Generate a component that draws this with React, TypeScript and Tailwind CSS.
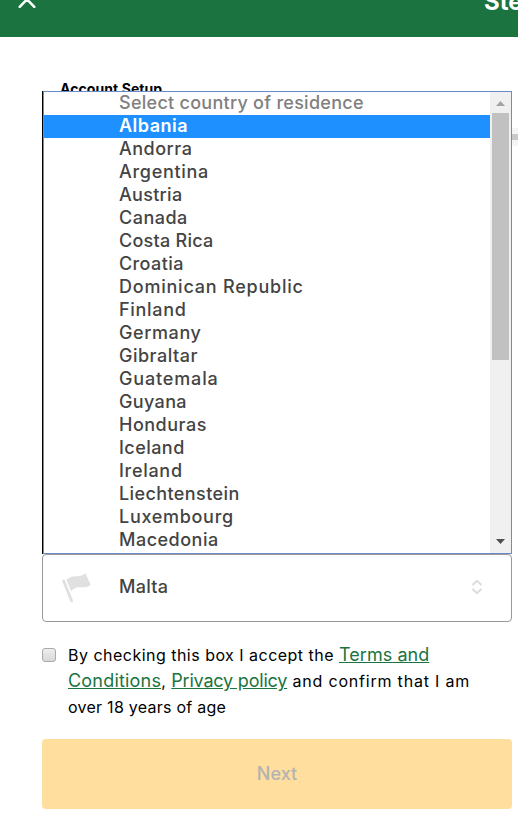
import React, { useState, type JSX } from "react";

const countries = [
  { name: "Albania", tracking: "tracking-[0.5px]" },
  { name: "Andorra", tracking: "tracking-[0.5px]" },
  { name: "Argentina", tracking: "tracking-[0.7px]" },
  { name: "Austria", tracking: "tracking-[0.3px]" },
  { name: "Canada", tracking: "tracking-[0.5px]" },
  { name: "Costa Rica", tracking: "tracking-[0.25px]" },
  { name: "Croatia", tracking: "tracking-[0.4px]" },
  { name: "Dominican Republic", tracking: "tracking-[0.78px]" },
  { name: "Finland", tracking: "tracking-[0.7px]" },
  { name: "Germany", tracking: "tracking-[0.6px]" },
  { name: "Gibraltar", tracking: "tracking-[0.5px]" },
  { name: "Guatemala", tracking: "tracking-[0.85px]" },
  { name: "Guyana", tracking: "tracking-[0.35px]" },
  { name: "Honduras", tracking: "tracking-[0.5px]" },
  { name: "Iceland", tracking: "tracking-[0.45px]" },
  { name: "Ireland", tracking: "tracking-[0.7px]" },
  { name: "Liechtenstein", tracking: "tracking-[0.4px]" },
  { name: "Luxembourg", tracking: "tracking-[0.7px]" },
  { name: "Macedonia", tracking: "tracking-[0.5px]" },
];

export default function App(): JSX.Element {
  const [active, setActive] = useState("Albania");
  const [accepted, setAccepted] = useState(false);

  return (
    <div className="h-[820px] w-full overflow-hidden bg-white font-['Inter',sans-serif] text-black">
      {/* Header */}
      <header className="flex h-[37px] items-start justify-between overflow-hidden bg-[#1b743f] pl-[18px] text-white">
        <button aria-label="Close" className="-mt-[10px]">
          <svg className="h-[18px] w-[18px]" viewBox="0 0 18 18" fill="none" stroke="currentColor">
            <path d="M1.7 1.7L16.3 16.9M16.3 1.7L1.7 16.9" strokeWidth={2.5} strokeLinecap="round" />
          </svg>
        </button>
        <h1 className="w-[34px] -mt-[12px] text-[24px] leading-[28px] font-bold whitespace-nowrap">Ste</h1>
      </header>

      <main className="pl-[42px] pr-[6px] pt-[42px]">
        {/* Step title */}
        <div className="h-[49px] pl-[18px] text-[14px] leading-5 font-bold tracking-[0.08px]">Account Setup</div>

        {/* Progress track */}
        <div className="-mr-[6px] flex h-[18px] items-center bg-[#f5f5f5]">
          <div className="h-[6px] w-full bg-[#c8c8c8]" />
        </div>

        {/* Country select */}
        <div className="relative mt-[408px]">
          <button className="flex h-[68px] w-full items-center rounded-[4px] border border-[#999] bg-white pl-[19px] pr-[28px] text-left">
            <svg className="h-[32px] w-[30px] shrink-0" viewBox="0 0 30 32" fill="#e0e0e0">
              <path d="M.3 9.2C-.1 7.7 2.2 6.8 2.9 8.2L11 28.6C11.6 30.3 9.2 31.3 8.4 29.8Z" />
              <path d="M4.4 7.8C10.5 1.6 16.5 6.9 23.6 1.2C24.8 4.5 27 9.2 28.8 12.6C23 18.6 15 11.6 9.2 19.2Z" />
            </svg>
            <span className="ml-[27px] flex-1 pb-[3px] text-[18px] font-medium tracking-[0.25px] text-[#444]">Malta</span>
            <svg className="mb-[2px] h-[16px] w-[12px]" viewBox="0 0 12 16" fill="none" stroke="#dcdcdc" strokeWidth={2}>
              <path d="M1.5 6L6 1.8L10.5 6M1.5 10L6 14.2L10.5 10" />
            </svg>
          </button>

          {/* Open list */}
          <div className="absolute bottom-[68px] left-0 flex h-[463px] w-[470px] border-l border-black bg-white">
            <div className="flex w-full border border-[#6c8cc9]">
              <ul className="flex-1 text-[18px] leading-[21px] font-medium text-[#444]">
                <li className="h-[23px] pl-[75px] tracking-[0.27px] text-[#808080]">Select country of residence</li>
                {countries.map((country) => (
                  <li
                    key={country.name}
                    onMouseEnter={() => setActive(country.name)}
                    className={`h-[23px] pl-[75px] ${country.tracking} ${
                      active === country.name ? "bg-[#1e90ff] font-semibold text-white" : ""
                    }`}
                  >
                    {country.name}
                  </li>
                ))}
              </ul>
              <div className="flex w-[21px] flex-col items-center bg-[#f0f0f0]">
                <svg className="h-[21px] w-[21px]" viewBox="0 0 21 21" fill="#a3a3a3">
                  <path d="M6 14L10.5 9L15 14Z" />
                </svg>
                <div className="h-[247px] w-[17px] bg-[#c1c1c1]" />
                <svg className="mt-auto h-[21px] w-[21px]" viewBox="0 0 21 21" fill="#505050">
                  <path d="M6 7L15 7L10.5 12Z" />
                </svg>
              </div>
            </div>
          </div>
        </div>

        {/* Terms */}
        <div className="mt-[20px] flex items-start">
          <input
            type="checkbox"
            checked={accepted}
            onChange={(e) => setAccepted(e.target.checked)}
            aria-label="Accept terms"
            className="mt-[6px] h-[14px] w-[14px] shrink-0 appearance-none rounded-[3px] border border-[#aaa] bg-linear-to-b from-[#eee] to-[#d8d8d8]"
          />
          <p className="ml-[12px] text-[16px] leading-[26px] whitespace-nowrap">
            <span className="tracking-[0.48px]">By checking this box I accept the </span>
            <a className="text-[18px] tracking-[0.05px] text-[#1b743f] underline">Terms and</a>
            <br />
            <a className="text-[18px] tracking-[0.2px] text-[#1b743f] underline">Conditions</a>
            <span className="tracking-[0.5px]">, </span>
            <a className="text-[18px] tracking-[-0.2px] text-[#1b743f] underline">Privacy policy</a>
            <span className="tracking-[0.8px]"> and confirm that I am</span>
            <br />
            <span className="tracking-[0.26px]">over 18 years of age</span>
          </p>
        </div>

        {/* Next */}
        <button className="mt-[19px] h-[70px] w-full rounded-[4px] bg-[#ffde9e] pb-[2px] text-[18px] font-medium text-[#b3b3b3]">
          Next
        </button>
      </main>
    </div>
  );
}
